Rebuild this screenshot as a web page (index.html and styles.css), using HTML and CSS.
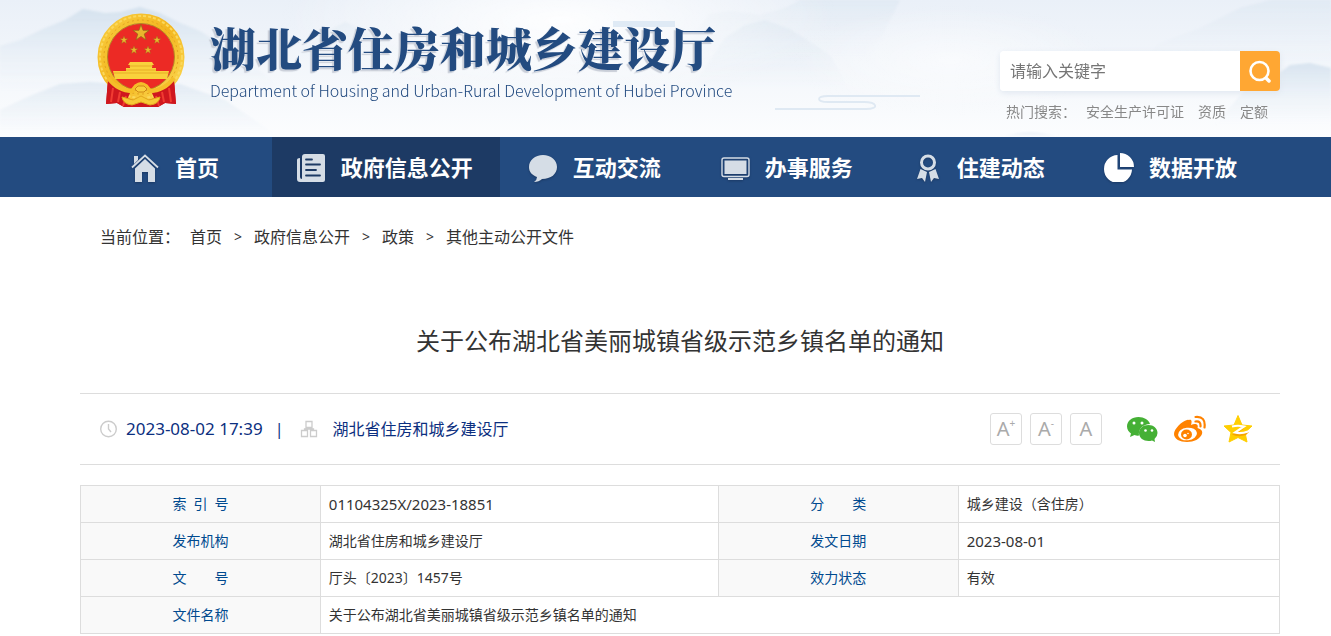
FILE: index.html
```html
<!DOCTYPE html>
<html lang="zh-CN">
<head>
<meta charset="utf-8">
<meta name="viewport" content="width=device-width, initial-scale=1">
<title>关于公布湖北省美丽城镇省级示范乡镇名单的通知</title>
<link rel="stylesheet" href="styles.css">
</head>
<body>
<header class="banner">
  <svg class="scenery" viewBox="0 0 1331 137" preserveAspectRatio="none" aria-hidden="true">
    <defs>
      <linearGradient id="sky" x1="0" y1="0" x2="0" y2="1"><stop offset="0" stop-color="#eaf0f8"/><stop offset="1" stop-color="#fcfdfe"/></linearGradient>
      <linearGradient id="hill" x1="0" y1="0" x2="0" y2="1"><stop offset="0" stop-color="#d5e2ee"/><stop offset="1" stop-color="#eaf1f8" stop-opacity="0"/></linearGradient>
      <radialGradient id="mist"><stop offset="0" stop-color="#fff" stop-opacity=".9"/><stop offset="1" stop-color="#fff" stop-opacity="0"/></radialGradient>
      <filter id="soft"><feGaussianBlur stdDeviation="1"/></filter>
    </defs>
    <rect width="1331" height="137" fill="url(#sky)"/>
    <g fill="url(#hill)" filter="url(#soft)">
      <path d="M0 46 20 40 45 28 65 20 83 9 105 13 120 12 140 7 160 13 178 22 200 31 225 47 270 78 280 90H0z"/>
      <path opacity=".6" d="M0 110 30 96 60 84 90 82 130 85 180 84 225 100 280 137H0z"/>
      <path opacity=".45" d="M300 50 330 30 345 22 370 33 420 58H300z"/>
      <path opacity=".4" d="M680 50 710 14 730 11 760 15 785 8 800 0 900 0 870 60z"/>
      <path opacity=".6" d="M690 90 725 38 745 25 765 20 790 29 830 55 850 90z"/>
      <path opacity=".4" d="M1130 70 1160 43 1200 28 1240 8 1270 0H1331V70z"/>
      <path opacity=".9" d="M1215 125 1245 90 1275 76 1290 65 1310 63 1331 68V125z"/>
      <path opacity=".6" d="M1000 137Q1030 128 1060 137z"/>
    </g>
    <ellipse cx="560" cy="20" rx="280" ry="80" fill="url(#mist)"/>
    <ellipse cx="950" cy="60" rx="160" ry="55" fill="url(#mist)" opacity=".6"/>
    <path d="M613 24H675" stroke="#dfeaf5" stroke-width="6"/>
    <path d="M775 109H866C880 109 877 102 864 102H828C816 102 816 96 828 96H920" fill="none" stroke="#dfe9f3" stroke-width="1.800"/>
  </svg>
  <div class="banner-inner">
    <a class="brand" href="#">
      <svg class="emblem" viewBox="0 0 90 96" aria-hidden="true">
        <defs>
          <linearGradient id="gold" x1="0" y1="0" x2="1" y2="1"><stop offset="0" stop-color="#f8cc3d"/><stop offset=".5" stop-color="#f3b61f"/><stop offset="1" stop-color="#fbd852"/></linearGradient>
          <path id="star" d="M0-10 2.4-3.1 9.5-3.1 3.8 1.2 5.9 8.1 0 4-5.9 8.1-3.8 1.2-9.5-3.1-2.4-3.1z"/>
        </defs>
        <path d="M12 68 32 76 45 80 58 76 78 68 80 92 69 91 62 95H28L21 91 10 92z" fill="#cf171e"/>
        <circle cx="45" cy="45" r="38.500" fill="none" stroke="url(#gold)" stroke-width="10"/>
        <circle cx="45" cy="45" r="41" fill="none" stroke="#fbd85c" stroke-width="2" stroke-dasharray="3 2"/>
        <circle cx="45" cy="45" r="37" fill="none" stroke="#e3a220" stroke-width="1" stroke-dasharray="2 3"/>
        <circle cx="45" cy="45" r="33.500" fill="#ec2a25" stroke="#b5871d"/>
        <path d="M12 67Q20 77 34 81L28 95 21 91 10 92zM78 67Q70 77 56 81L62 95 69 91 80 92z" fill="#cf171e"/>
        <path d="M17 76 15 90M24 80 22 90M73 76 75 90M66 80 68 90M30 84 27 94M60 84 63 94" stroke="#f13b32" stroke-width="2" fill="none"/>
        <g fill="#e9b62d" stroke="#8e6418" stroke-width=".8">
          <use href="#star" transform="translate(45 21) scale(.85)"/>
          <use href="#star" transform="translate(28 28) scale(.42)"/>
          <use href="#star" transform="translate(61 28) scale(.42)"/>
          <use href="#star" transform="translate(38 38) scale(.42)"/>
          <use href="#star" transform="translate(52 38) scale(.42)"/>
        </g>
        <path d="M34 50H56L58 53H56V56H60V59H73L71 67H19L17 59H30V56H34V53H32z" fill="#f9d13c"/>
        <path d="M33 54H57M30 58H60M18 61H72" stroke="#e3a522" stroke-width=".8"/>
        <path d="M12 66Q22 79 36 79L40 74Q45 70 50 74L54 79Q68 79 78 66" fill="none" stroke="#f5be2a" stroke-width="4"/>
        <path d="M39 77 42 74H48L51 77 48 80H42z" fill="#f9cf3d" stroke="#cf8817"/>
        <path d="M26 85 37 88 45 84 53 88 64 85Q63 92 54 93L45 90 36 93Q27 92 26 85z" fill="#f7ca37" stroke="#e2a51c"/>
      </svg>
      <span class="brand-text">
        <span class="brand-name">湖北省住房和城乡建设厅</span>
        <span class="brand-en">Department of Housing and Urban-Rural Development of Hubei Province</span>
      </span>
    </a>
    <div class="search">
      <form class="search-form">
        <input class="search-input" type="text" placeholder="请输入关键字" aria-label="请输入关键字">
        <button class="search-button" type="button" aria-label="搜索">
          <svg viewBox="0 0 24 24" width="24" height="24" fill="none" stroke="#fff" stroke-width="2.600" stroke-linecap="round"><circle cx="11.500" cy="12" r="9"/><path d="M18.500 19.500 21 22" stroke-width="3.500"/></svg>
        </button>
      </form>
      <div class="hot"><span class="hot-label">热门搜索：</span><a href="#">安全生产许可证</a><a href="#">资质</a><a href="#">定额</a></div>
    </div>
  </div>
</header>
<nav class="nav">
  <div class="nav-inner">
    <a class="nav-item" href="#">
      <svg class="nav-icon" viewBox="0 0 30 30"><path d="M4 4H8V8L4 12zM15 7 25 16.500V30H18V20H12V30H5V16.500z"/><path d="M2 15.500 15 3.500 28 15.500" fill="none" stroke="#d5dde6" stroke-width="1.800"/></svg>
      <span>首页</span></a>
    <a class="nav-item nav-item-wide active" href="#">
      <svg class="nav-icon" viewBox="0 0 30 30"><path d="M9 2H27Q29 2 29 4V28Q29 30 27 30H4Q1 30 1 27V8Q1 6 4 6V25Q4 27 6 27V5Q6 2 9 2z"/><path d="M10 7.500H16M10 12.500H24M10 18H20M10 23.500H24" stroke="#1d3a64" stroke-width="1.800" stroke-linecap="round"/></svg>
      <span>政府信息公开</span></a>
    <a class="nav-item" href="#">
      <svg class="nav-icon" viewBox="0 0 30 30"><path d="M15 3C7 3 1 8 1 15C1 20 4 23 9 25Q9 28 6 30Q11 30 14 27C23 27 29 22 29 15C29 8 23 3 15 3z"/></svg>
      <span>互动交流</span></a>
    <a class="nav-item" href="#">
      <svg class="nav-icon" viewBox="0 0 30 30"><rect x="2" y="6" width="27" height="18.500" rx="2" fill="none" stroke="#d5dde6" stroke-width="1.400"/><path d="M4.500 8.500H26.500V22H4.500zM8 26H23V28H8z"/></svg>
      <span>办事服务</span></a>
    <a class="nav-item" href="#">
      <svg class="nav-icon" viewBox="0 0 30 30"><circle cx="16" cy="10.500" r="6.500" fill="none" stroke="#d5dde6" stroke-width="3"/><path d="M8.500 17 15 20 13 30 10 26 5 27zM23.500 17 17 20 19 30 22 26 27 27z"/></svg>
      <span>住建动态</span></a>
    <a class="nav-item" href="#">
      <svg class="nav-icon nav-icon-bright" viewBox="0 0 30 30"><path d="M13.500 3V17.500H28A14 14 0 1 1 13.500 3zM16 1A14 14 0 0 1 30 15H16z"/></svg>
      <span>数据开放</span></a>
  </div>
</nav>
<main class="content">
  <nav class="crumbs" aria-label="当前位置"><span class="crumb-label">当前位置：</span><a href="#">首页</a><span class="sep">&gt;</span><a href="#">政府信息公开</a><span class="sep">&gt;</span><a href="#">政策</a><span class="sep">&gt;</span><a href="#">其他主动公开文件</a></nav>
  <h1 class="title">关于公布湖北省美丽城镇省级示范乡镇名单的通知</h1>
  <div class="info">
    <div class="source">
      <svg viewBox="0 0 18 18" width="18" height="18" fill="none" stroke="#ccc" stroke-width="1.400"><circle cx="8.500" cy="9" r="7.800"/><path d="M8.500 4V9L11 12"/></svg>
      <time class="date">2023-08-02 17:39</time>
      <span class="bar">|</span>
      <svg viewBox="0 0 18 18" width="18" height="18" fill="none" stroke="#ccc" stroke-width="1.300"><path d="M6 1.500H12V7.500H6zM1.500 10.500H7.500V16.500H1.500zM10.500 10.500H16.500V16.500H10.500zM9 7.500V9M4.500 10.500V9H13.500V10.500"/></svg>
      <span class="office">湖北省住房和城乡建设厅</span>
    </div>
    <div class="tools">
      <button class="size-button" type="button" aria-label="放大字号">A<sup>+</sup></button>
      <button class="size-button" type="button" aria-label="缩小字号">A<sup>-</sup></button>
      <button class="size-button" type="button" aria-label="默认字号">A</button>
      <a class="share share-first" href="#" aria-label="微信"><svg viewBox="0 0 32 32"><path d="M12.500 4C6 4 1 8 1 13.500C1 17 3 19 5 20.500L4 24 8.500 22Q11 23 13 22.500C12 16 17 11 24 11C23 7 18 4 12.500 4z" fill="#45b035"/><path d="M22.500 12C17 12 13 15.500 13 20C13 25 17.500 28 22.500 28Q24.500 28 26 27.500L29 29 28.500 26Q31.500 23.500 31.500 20C31.500 15.500 27.500 12 22.500 12z" fill="#45b035"/><g fill="#fff"><circle cx="8" cy="10" r="1.500"/><circle cx="16" cy="10" r="1.500"/><circle cx="19.500" cy="17.500" r="1.300"/><circle cx="26" cy="17.500" r="1.300"/></g></svg></a>
      <a class="share" href="#" aria-label="微博"><svg viewBox="0 0 32 32"><path d="M15 7C18 6 18 9 17 12C21 10 25 11 23.500 15C27 16 29 18 28 21C26 26 20 29 13 29C6 29 0 26 0 21C0 16 8 8 13 7Q14 6.500 15 7z" fill="#ff8200"/><ellipse cx="13.500" cy="21" rx="9.500" ry="6.300" fill="#fff" transform="rotate(-6 13.500 21)"/><ellipse cx="12.500" cy="21.500" rx="5.500" ry="5" fill="#ff8200"/><circle cx="11" cy="22.500" r="1.800" fill="#fff"/><circle cx="14" cy="20.500" r=".8" fill="#fff"/><path d="M21.500 8.500Q27 7.500 26.500 13.500M21.500 4Q32 3 30.500 14.500" fill="none" stroke="#ff8200" stroke-width="2.200" stroke-linecap="round"/></svg></a>
      <a class="share" href="#" aria-label="QQ空间"><svg viewBox="0 0 32 32"><path d="M16 2.500 20 12 30 13 23 19.500 25 29 16 24.500 7 29 9 19.500 2 13 12 12z" fill="#ffce00" stroke="#ffce00" stroke-linejoin="round"/><path d="M10 21.500 20 14.500 22 15.500 15 20.500 27 19 24 22Q16 24.500 10 21.500z" fill="#f5a400"/><path d="M10 13.500Q16 12 22 13.500L13 19.500Q19 21 26 18.500" fill="none" stroke="#fff" stroke-width="2.200"/></svg></a>
    </div>
  </div>
  <table class="meta">
    <colgroup><col class="col-label"><col class="col-main"><col class="col-label"><col></colgroup>
    <tbody>
      <tr><th scope="row"><span class="spread"><span>索</span><span>引</span><span>号</span></span></th><td class="num">01104325X/2023-18851</td><th scope="row"><span class="spread"><span>分</span><span>类</span></span></th><td>城乡建设（含住房）</td></tr>
      <tr><th scope="row">发布机构</th><td>湖北省住房和城乡建设厅</td><th scope="row">发文日期</th><td class="num">2023-08-01</td></tr>
      <tr><th scope="row"><span class="spread"><span>文</span><span>号</span></span></th><td>厅头〔2023〕1457号</td><th scope="row">效力状态</th><td>有效</td></tr>
      <tr><th scope="row">文件名称</th><td colspan="3">关于公布湖北省美丽城镇省级示范乡镇名单的通知</td></tr>
    </tbody>
  </table>
</main>
</body>
</html>
```
FILE: styles.css
```css
* { box-sizing: border-box; }
body {
  margin: 0;
  background: #fff;
  color: #333;
  font: 16px/24px "Noto Sans", "Noto Sans CJK SC", sans-serif;
}
a { color: inherit; text-decoration: none; }
svg { display: block; flex: none; }

.banner { position: relative; overflow: hidden; }
.scenery { position: absolute; inset: 0; width: 100%; height: 100%; }
.banner-inner {
  position: relative;
  display: flex;
  justify-content: space-between;
  min-height: 137px;
  padding: 12px 51px 12px 96px;
}
.brand { display: flex; gap: 24px; color: #234b80; }
.emblem { width: 90px; height: 96px; }
.brand-text { display: flex; flex-direction: column; gap: 8px; padding-top: 10px; white-space: nowrap; }
.brand-name {
  font: 900 46px/48px "Noto Serif CJK SC", "Noto Sans CJK SC", serif;
  text-shadow: -2px 2px 1px #c9ced8;
}
.brand-en { font: 300 16px/24px "Noto Sans CJK SC", sans-serif; }

.search { padding-top: 39px; }
.search-form {
  display: flex;
  width: 280px;
  border-radius: 4px;
  box-shadow: 0 2px 6px #e0e7f0;
}
.search-input {
  flex: 1;
  min-width: 0;
  height: 40px;
  padding: 0 10px;
  border: 0;
  border-radius: 4px 0 0 4px;
  background: #fff;
  font: inherit;
}
.search-input::placeholder { color: #757575; opacity: 1; }
.search-button {
  display: grid;
  place-items: center;
  width: 40px;
  height: 40px;
  padding: 0;
  border: 0;
  border-radius: 0 4px 4px 0;
  background: #ffa733;
}
.hot { display: flex; gap: 14px; padding: 9px 0 0 6px; color: #888; font-size: 14px; }
.hot-label { margin-right: -4px; }

.nav { background: #234b80; }
.nav-inner { display: flex; padding: 0 63px 0 80px; }
.nav-item {
  display: flex;
  flex: 16;
  align-items: center;
  justify-content: center;
  gap: 15px;
  min-height: 60px;
  padding-right: 3px;
  color: #fff;
  font-size: 22px;
  font-weight: 700;
  white-space: nowrap;
}
.nav-item-wide { flex: 19; }
.active { background: #1d3a64; }
.nav-icon { width: 30px; height: 30px; fill: #d5dde6; filter: drop-shadow(0 1px 1px #1a3863); }
.nav-icon-bright { fill: #fff; }

.content { padding: 28px 51px 2px 80px; }
.crumbs { display: flex; gap: 12px; padding-left: 20px; }
.crumb-label { margin-right: -2px; }
.sep { width: 8px; font-size: 14px; }
.title {
  margin: 74px 0 34px;
  font-size: 24px;
  font-weight: 400;
  line-height: 36px;
  text-align: center;
}
.info {
  display: flex;
  align-items: center;
  justify-content: space-between;
  min-height: 72px;
  padding: 0 26px 0 20px;
  border-top: 1px solid #ddd;
  border-bottom: 1px solid #ddd;
}
.source { display: flex; align-items: center; color: #0c2f80; }
.date { margin: 0 12px 0 8px; font-size: 17px; }
.bar { margin-right: 17px; }
.office { margin-left: 14px; }
.tools { display: flex; align-items: center; gap: 8px; }
.size-button {
  display: flex;
  align-items: center;
  justify-content: center;
  width: 32px;
  height: 32px;
  padding: 0;
  border: 1px solid #ddd;
  border-radius: 3px;
  background: #fff;
  color: #aaa;
  font: 20px/30px "Noto Sans", sans-serif;
}
.size-button sup { align-self: flex-start; font-size: 10px; line-height: 18px; }
.share { width: 32px; height: 32px; margin-right: 8px; }
.share-first { margin-left: 16px; }
.share:last-child { margin-right: 0; }

.meta {
  width: 100%;
  margin-top: 20px;
  border-collapse: collapse;
  table-layout: fixed;
  font-size: 14px;
}
.col-label { width: 20%; }
.col-main { width: 33.2%; }
.meta th, .meta td { height: 37px; padding: 6px 8px; border: 1px solid #ddd; }
.meta th { background: #f9f9f9; color: #004a8f; font-weight: 400; text-align: center; }
.meta td { text-align: left; }
.meta .num { font-size: 15px; }
.spread { display: inline-flex; justify-content: space-between; width: 56px; }
```
